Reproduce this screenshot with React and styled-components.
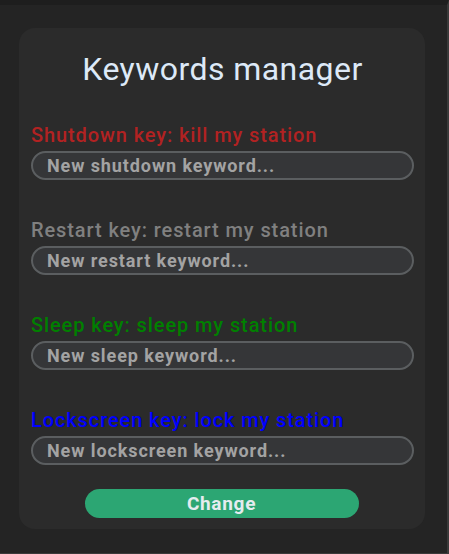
import React from "react";
import styled, { createGlobalStyle } from "styled-components";

const Global = createGlobalStyle`
  html, body { margin: 0; padding: 0; background: #242424; }
  body { font-family: Roboto, "Noto Sans", sans-serif; }
  * { box-sizing: border-box; }
`;

const Page = styled.div`
  width: 449px;
  height: 554px;
  background: #242424;
  border-top: 5px solid #1e1e1e;
  border-right: 2px solid #3a3a3a;
  border-bottom: 1px solid #3a3a3a;
  display: flex;
  flex-direction: column;
  align-items: flex-start;
  padding: 23px 0 0 19px;
`;

const Card = styled.div`
  width: 406px;
  height: 501px;
  background: #2b2b2b;
  border-radius: 16px;
  padding: 23px 11px 11px 12px;
  display: flex;
  flex-direction: column;
`;

const Title = styled.h1`
  margin: 0 0 36px;
  font-size: 32px;
  font-weight: 400;
  line-height: 37px;
  letter-spacing: 0.45px;
  text-align: center;
  color: #dde9f7;
`;

const Group = styled.div`
  display: flex;
  flex-direction: column;
  gap: 4px;
  margin-bottom: ${(p) => (p.$last ? "24px" : "39px")};
`;

const Label = styled.label`
  font-size: 20px;
  font-weight: 500;
  line-height: 23px;
  letter-spacing: 0.9px;
  color: ${(p) => p.$color};
`;

const Input = styled.input`
  width: 100%;
  height: 29px;
  border: 2px solid #5b5e60;
  border-radius: 15px;
  background: #353638;
  padding: 0 14px;
  font-family: Roboto, "Noto Sans", sans-serif;
  font-size: 18px;
  font-weight: 700;
  letter-spacing: 0.9px;
  color: #dddddd;
  outline: none;
  &::placeholder { color: #a3a3a3; }
`;

const Button = styled.button`
  align-self: center;
  margin-left: -2px;
  width: 274px;
  height: 29px;
  border: none;
  border-radius: 15px;
  background: #2ca673;
  color: #e4ecef;
  font-family: Roboto, "Noto Sans", sans-serif;
  font-size: 19px;
  font-weight: 700;
  letter-spacing: 0.7px;
  cursor: pointer;
`;

const fields = [
  { label: "Shutdown key: kill my station", color: "#b22222", ph: "New shutdown keyword..." },
  { label: "Restart key: restart my station", color: "#808080", ph: "New restart keyword..." },
  { label: "Sleep key: sleep my station", color: "#008000", ph: "New sleep keyword..." },
  { label: "Lockscreen key: lock my station", color: "#0000ff", ph: "New lockscreen keyword..." },
];

export default function App() {
  return (
    <>
      <Global />
      <Page>
        <Card>
          <Title>Keywords manager</Title>
          {fields.map((f, i) => (
            <Group key={f.label} $last={i === fields.length - 1}>
              <Label $color={f.color}>{f.label}</Label>
              <Input placeholder={f.ph} />
            </Group>
          ))}
          <Button>Change</Button>
        </Card>
      </Page>
    </>
  );
}
